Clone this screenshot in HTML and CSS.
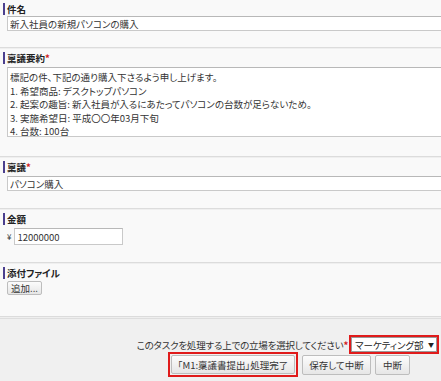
FILE: index.html
```html
<!DOCTYPE html>
<html lang="ja">
<head>
<meta charset="utf-8">
<title>稟議書</title>
<link rel="stylesheet" href="styles.css">
</head>
<body>
<div class="form">
  <section class="field field-first">
    <div class="label">件名</div>
    <input class="text-input" type="text" value="新入社員の新規パソコンの購入">
  </section>
  <section class="field field-summary">
    <div class="label">稟議要約<span class="req">*</span></div>
    <textarea class="text-area">標記の件、下記の通り購入下さるよう申し上げます。
1. 希望商品: デスクトップパソコン
2. 起案の趣旨: 新入社員が入るにあたってパソコンの台数が足らないため。
3. 実施希望日: 平成〇〇年03月下旬
4. 台数: 100台</textarea>
  </section>
  <section class="field">
    <div class="label">稟議<span class="req">*</span></div>
    <input class="text-input" type="text" value="パソコン購入">
  </section>
  <section class="field field-money">
    <div class="label">金額</div>
    <div class="money">
      <span class="yen">¥</span>
      <input class="text-input amount" type="text" value="12000000">
    </div>
  </section>
  <section class="field field-file">
    <div class="label">添付ファイル</div>
    <button class="btn btn-add" type="button">追加...</button>
  </section>
  <footer class="footer">
    <div class="role-row">
      <span class="role-text">このタスクを処理する上での立場を選択してください<span class="req">*</span></span>
      <div class="highlight highlight-select">
        <div class="select"><span>マーケティング部</span><span class="arrow">▼</span></div>
      </div>
    </div>
    <div class="button-row">
      <div class="highlight">
        <button class="btn btn-main" type="button">「M1:稟議書提出」処理完了</button>
      </div>
      <button class="btn btn-save" type="button">保存して中断</button>
      <button class="btn btn-stop" type="button">中断</button>
    </div>
  </footer>
</div>
</body>
</html>
```

FILE: styles.css
```css
html, body {
  margin: 0;
  padding: 0;
  overflow: hidden;
}

body {
  width: 441px;
  height: 381px;
  background: #f9f9f9;
  color: #333;
  font-family: "Noto Sans CJK JP", "Noto Sans", sans-serif;
  font-size: 9.5px;
  font-feature-settings: "palt";
}

.form {
  display: flex;
  flex-direction: column;
  height: 381px;
}

.field {
  display: flex;
  flex-direction: column;
  align-items: flex-start;
  gap: 3px;
  padding: 4px 0 17px;
  border-bottom: 1px solid #dcdcdc;
  box-shadow: 0 1px 0 #efefef;
}

.field-first {
  gap: 1px;
  padding-top: 3px;
  padding-bottom: 16px;
}

.field-summary {
  gap: 3px;
  padding-bottom: 19px;
}

.field-money {
  padding-bottom: 17px;
}

.field-file {
  gap: 2px;
  padding-bottom: 21px;
}

.label {
  height: 12px;
  line-height: 12px;
  margin-left: 3px;
  padding-left: 2px;
  border-left: 2px solid #4b3f8e;
  font-weight: bold;
  color: #222;
}

.req {
  color: #d02020;
  font-weight: bold;
}

.text-input {
  box-sizing: border-box;
  margin: 0 0 0 7px;
  width: 470px;
  height: 15px;
  padding: 0 2px;
  border: 1px solid #c9c9c9;
  border-top-color: #b8b8b8;
  background: #fff;
  color: #333;
  font: inherit;
  font-feature-settings: "palt";
  outline: none;
}

.text-area {
  box-sizing: border-box;
  display: block;
  margin: 0 0 0 7px;
  width: 470px;
  height: 70px;
  padding: 3px 2px;
  border: 1px solid #c9c9c9;
  border-top-color: #b8b8b8;
  background: #fff;
  color: #333;
  font: inherit;
  font-feature-settings: "palt";
  line-height: 13.5px;
  resize: none;
  overflow: hidden;
  outline: none;
}

.money {
  display: flex;
  align-items: center;
  gap: 3px;
  margin-left: 7px;
}

.yen {
  font-size: 8px;
}

.money .amount {
  margin: 0;
  width: 109px;
  height: 17px;
}

.btn {
  box-sizing: border-box;
  margin: 0;
  padding: 0;
  border: 1px solid #bdbdbd;
  border-radius: 2px;
  background: linear-gradient(#fcfcfc, #e6e6e6);
  color: #333;
  font: inherit;
  font-feature-settings: "palt";
  cursor: pointer;
}

.btn-add {
  margin-left: 7px;
  width: 35px;
  height: 14px;
  line-height: 12px;
}

.footer {
  flex: 1;
  display: flex;
  flex-direction: column;
  align-items: flex-end;
  margin-top: 1px;
  padding-top: 16px;
  background: #f0f0f0;
  border-top: 1px solid #dedede;
}

.role-row {
  display: flex;
  align-items: center;
  gap: 1px;
  padding-right: 2px;
}

.role-text {
  letter-spacing: -0.2px;
}

.highlight {
  border: 2px solid #e01b1b;
  padding: 1px;
  display: flex;
}

.highlight-select {
  padding: 0;
}

.select {
  box-sizing: border-box;
  display: flex;
  align-items: center;
  justify-content: space-between;
  width: 86px;
  height: 15px;
  padding: 0 2px 0 3px;
  background: #fff;
  border: 1px solid #9a9a9a;
  color: #222;
}

.arrow {
  font-size: 6px;
}

.button-row {
  display: flex;
  align-items: center;
  gap: 4px;
  margin-top: -2px;
  padding-right: 31px;
}

.btn-main {
  width: 124px;
  height: 19px;
}

.btn-save {
  width: 69px;
  height: 20px;
}

.btn-stop {
  width: 35px;
  height: 20px;
}
```
